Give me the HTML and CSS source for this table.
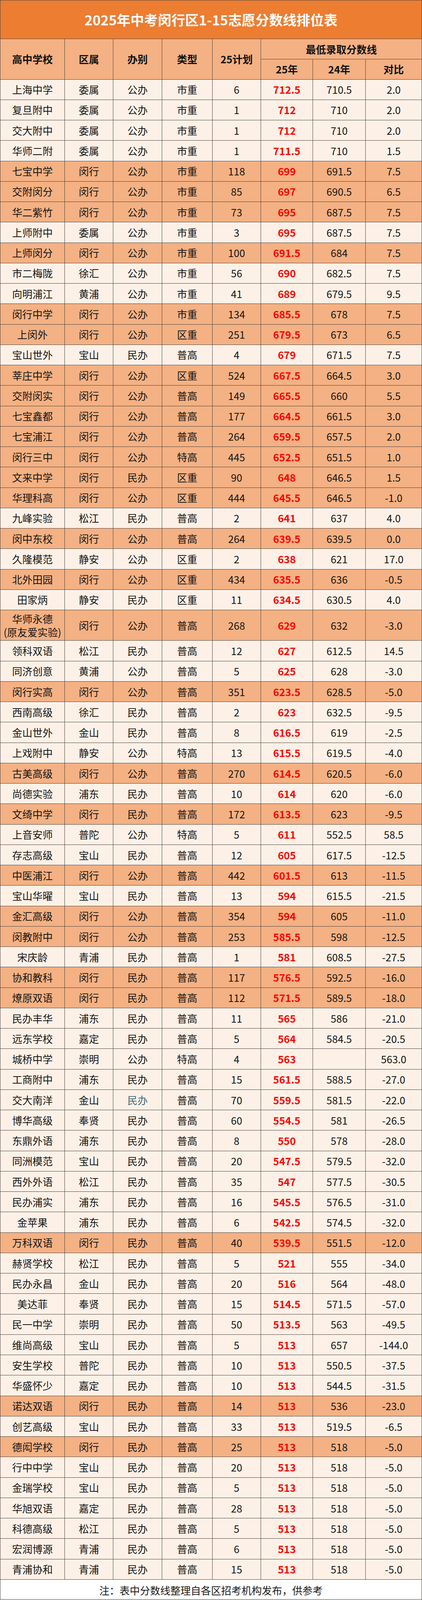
FILE: index.html
```html
<!DOCTYPE html>
<html lang="zh-CN">
<head>
<meta charset="utf-8">
<title>2025年中考闵行区1-15志愿分数线排位表</title>
<link rel="stylesheet" href="styles.css">
</head>
<body>
<div class="sheet" role="table">
<div class="cell title">2025年中考闵行区1-15志愿分数线排位表</div>

<div class="cell hd span-r">高中学校</div>
<div class="cell hd span-r">区属</div>
<div class="cell hd span-r">办别</div>
<div class="cell hd span-r">类型</div>
<div class="cell hd span-r">25计划</div>
<div class="cell hd span-c hd-top">最低录取分数线</div>
<div class="cell hd hd-bot">25年</div>
<div class="cell hd hd-bot">24年</div>
<div class="cell hd hd-bot">对比</div>

<div class="row"><div>上海中学</div><div>委属</div><div>公办</div><div>市重</div><div>6</div><div class="s25">712.5</div><div>710.5</div><div>2.0</div></div>
<div class="row"><div>复旦附中</div><div>委属</div><div>公办</div><div>市重</div><div>1</div><div class="s25">712</div><div>710</div><div>2.0</div></div>
<div class="row"><div>交大附中</div><div>委属</div><div>公办</div><div>市重</div><div>1</div><div class="s25">712</div><div>710</div><div>2.0</div></div>
<div class="row"><div>华师二附</div><div>委属</div><div>公办</div><div>市重</div><div>1</div><div class="s25">711.5</div><div>710</div><div>1.5</div></div>
<div class="row mh"><div>七宝中学</div><div>闵行</div><div>公办</div><div>市重</div><div>118</div><div class="s25">699</div><div>691.5</div><div>7.5</div></div>
<div class="row mh"><div>交附闵分</div><div>闵行</div><div>公办</div><div>市重</div><div>85</div><div class="s25">697</div><div>690.5</div><div>6.5</div></div>
<div class="row mh"><div>华二紫竹</div><div>闵行</div><div>公办</div><div>市重</div><div>73</div><div class="s25">695</div><div>687.5</div><div>7.5</div></div>
<div class="row"><div>上师附中</div><div>委属</div><div>公办</div><div>市重</div><div>3</div><div class="s25">695</div><div>687.5</div><div>7.5</div></div>
<div class="row mh"><div>上师闵分</div><div>闵行</div><div>公办</div><div>市重</div><div>100</div><div class="s25">691.5</div><div>684</div><div>7.5</div></div>
<div class="row"><div>市二梅陇</div><div>徐汇</div><div>公办</div><div>市重</div><div>56</div><div class="s25">690</div><div>682.5</div><div>7.5</div></div>
<div class="row"><div>向明浦江</div><div>黄浦</div><div>公办</div><div>市重</div><div>41</div><div class="s25">689</div><div>679.5</div><div>9.5</div></div>
<div class="row mh"><div>闵行中学</div><div>闵行</div><div>公办</div><div>市重</div><div>134</div><div class="s25">685.5</div><div>678</div><div>7.5</div></div>
<div class="row mh"><div>上闵外</div><div>闵行</div><div>公办</div><div>区重</div><div>251</div><div class="s25">679.5</div><div>673</div><div>6.5</div></div>
<div class="row"><div>宝山世外</div><div>宝山</div><div>民办</div><div>普高</div><div>4</div><div class="s25">679</div><div>671.5</div><div>7.5</div></div>
<div class="row mh"><div>莘庄中学</div><div>闵行</div><div>公办</div><div>区重</div><div>524</div><div class="s25">667.5</div><div>664.5</div><div>3.0</div></div>
<div class="row mh"><div>交附闵实</div><div>闵行</div><div>公办</div><div>普高</div><div>149</div><div class="s25">665.5</div><div>660</div><div>5.5</div></div>
<div class="row mh"><div>七宝鑫都</div><div>闵行</div><div>公办</div><div>普高</div><div>177</div><div class="s25">664.5</div><div>661.5</div><div>3.0</div></div>
<div class="row mh"><div>七宝浦江</div><div>闵行</div><div>公办</div><div>普高</div><div>264</div><div class="s25">659.5</div><div>657.5</div><div>2.0</div></div>
<div class="row mh"><div>闵行三中</div><div>闵行</div><div>公办</div><div>特高</div><div>445</div><div class="s25">652.5</div><div>651.5</div><div>1.0</div></div>
<div class="row mh"><div>文来中学</div><div>闵行</div><div>民办</div><div>区重</div><div>90</div><div class="s25">648</div><div>646.5</div><div>1.5</div></div>
<div class="row mh"><div>华理科高</div><div>闵行</div><div>公办</div><div>区重</div><div>444</div><div class="s25">645.5</div><div>646.5</div><div>-1.0</div></div>
<div class="row"><div>九峰实验</div><div>松江</div><div>民办</div><div>普高</div><div>2</div><div class="s25">641</div><div>637</div><div>4.0</div></div>
<div class="row mh"><div>闵中东校</div><div>闵行</div><div>公办</div><div>普高</div><div>264</div><div class="s25">639.5</div><div>639.5</div><div>0.0</div></div>
<div class="row"><div>久隆模范</div><div>静安</div><div>公办</div><div>区重</div><div>2</div><div class="s25">638</div><div>621</div><div>17.0</div></div>
<div class="row mh"><div>北外田园</div><div>闵行</div><div>公办</div><div>区重</div><div>434</div><div class="s25">635.5</div><div>636</div><div>-0.5</div></div>
<div class="row"><div>田家炳</div><div>静安</div><div>民办</div><div>区重</div><div>11</div><div class="s25">634.5</div><div>630.5</div><div>4.0</div></div>
<div class="row mh tall"><div class="two-line">华师永德<br>(原友爱实验)</div><div>闵行</div><div>公办</div><div>普高</div><div>268</div><div class="s25">629</div><div>632</div><div>-3.0</div></div>
<div class="row"><div>领科双语</div><div>松江</div><div>民办</div><div>普高</div><div>12</div><div class="s25">627</div><div>612.5</div><div>14.5</div></div>
<div class="row"><div>同济创意</div><div>黄浦</div><div>公办</div><div>普高</div><div>5</div><div class="s25">625</div><div>628</div><div>-3.0</div></div>
<div class="row mh"><div>闵行实高</div><div>闵行</div><div>公办</div><div>普高</div><div>351</div><div class="s25">623.5</div><div>628.5</div><div>-5.0</div></div>
<div class="row"><div>西南高级</div><div>徐汇</div><div>民办</div><div>普高</div><div>2</div><div class="s25">623</div><div>632.5</div><div>-9.5</div></div>
<div class="row"><div>金山世外</div><div>金山</div><div>民办</div><div>普高</div><div>8</div><div class="s25">616.5</div><div>619</div><div>-2.5</div></div>
<div class="row"><div>上戏附中</div><div>静安</div><div>公办</div><div>特高</div><div>13</div><div class="s25">615.5</div><div>619.5</div><div>-4.0</div></div>
<div class="row mh"><div>古美高级</div><div>闵行</div><div>公办</div><div>普高</div><div>270</div><div class="s25">614.5</div><div>620.5</div><div>-6.0</div></div>
<div class="row"><div>尚德实验</div><div>浦东</div><div>民办</div><div>普高</div><div>10</div><div class="s25">614</div><div>620</div><div>-6.0</div></div>
<div class="row mh"><div>文绮中学</div><div>闵行</div><div>民办</div><div>普高</div><div>172</div><div class="s25">613.5</div><div>623</div><div>-9.5</div></div>
<div class="row"><div>上音安师</div><div>普陀</div><div>公办</div><div>特高</div><div>5</div><div class="s25">611</div><div>552.5</div><div>58.5</div></div>
<div class="row"><div>存志高级</div><div>宝山</div><div>民办</div><div>普高</div><div>12</div><div class="s25">605</div><div>617.5</div><div>-12.5</div></div>
<div class="row mh"><div>中医浦江</div><div>闵行</div><div>公办</div><div>普高</div><div>442</div><div class="s25">601.5</div><div>613</div><div>-11.5</div></div>
<div class="row"><div>宝山华曜</div><div>宝山</div><div>民办</div><div>普高</div><div>13</div><div class="s25">594</div><div>615.5</div><div>-21.5</div></div>
<div class="row mh"><div>金汇高级</div><div>闵行</div><div>公办</div><div>普高</div><div>354</div><div class="s25">594</div><div>605</div><div>-11.0</div></div>
<div class="row mh"><div>闵教附中</div><div>闵行</div><div>公办</div><div>普高</div><div>253</div><div class="s25">585.5</div><div>598</div><div>-12.5</div></div>
<div class="row"><div>宋庆龄</div><div>青浦</div><div>民办</div><div>普高</div><div>1</div><div class="s25">581</div><div>608.5</div><div>-27.5</div></div>
<div class="row mh"><div>协和教科</div><div>闵行</div><div>民办</div><div>普高</div><div>117</div><div class="s25">576.5</div><div>592.5</div><div>-16.0</div></div>
<div class="row mh"><div>燎原双语</div><div>闵行</div><div>民办</div><div>普高</div><div>112</div><div class="s25">571.5</div><div>589.5</div><div>-18.0</div></div>
<div class="row"><div>民办丰华</div><div>浦东</div><div>民办</div><div>普高</div><div>11</div><div class="s25">565</div><div>586</div><div>-21.0</div></div>
<div class="row"><div>远东学校</div><div>嘉定</div><div>民办</div><div>普高</div><div>5</div><div class="s25">564</div><div>584.5</div><div>-20.5</div></div>
<div class="row"><div>城桥中学</div><div>崇明</div><div>公办</div><div>特高</div><div>4</div><div class="s25">563</div><div></div><div>563.0</div></div>
<div class="row"><div>工商附中</div><div>浦东</div><div>民办</div><div>普高</div><div>15</div><div class="s25">561.5</div><div>588.5</div><div>-27.0</div></div>
<div class="row"><div>交大南洋</div><div>金山</div><div class="alt-ink">民办</div><div>普高</div><div>70</div><div class="s25">559.5</div><div>581.5</div><div>-22.0</div></div>
<div class="row"><div>博华高级</div><div>奉贤</div><div>民办</div><div>普高</div><div>60</div><div class="s25">554.5</div><div>581</div><div>-26.5</div></div>
<div class="row"><div>东鼎外语</div><div>浦东</div><div>民办</div><div>普高</div><div>8</div><div class="s25">550</div><div>578</div><div>-28.0</div></div>
<div class="row"><div>同洲模范</div><div>宝山</div><div>民办</div><div>普高</div><div>20</div><div class="s25">547.5</div><div>579.5</div><div>-32.0</div></div>
<div class="row"><div>西外外语</div><div>松江</div><div>民办</div><div>普高</div><div>35</div><div class="s25">547</div><div>577.5</div><div>-30.5</div></div>
<div class="row"><div>民办浦实</div><div>浦东</div><div>民办</div><div>普高</div><div>16</div><div class="s25">545.5</div><div>576.5</div><div>-31.0</div></div>
<div class="row"><div>金苹果</div><div>浦东</div><div>民办</div><div>普高</div><div>6</div><div class="s25">542.5</div><div>574.5</div><div>-32.0</div></div>
<div class="row mh"><div>万科双语</div><div>闵行</div><div>民办</div><div>普高</div><div>40</div><div class="s25">539.5</div><div>551.5</div><div>-12.0</div></div>
<div class="row"><div>赫贤学校</div><div>松江</div><div>民办</div><div>普高</div><div>5</div><div class="s25">521</div><div>555</div><div>-34.0</div></div>
<div class="row"><div>民办永昌</div><div>金山</div><div>民办</div><div>普高</div><div>20</div><div class="s25">516</div><div>564</div><div>-48.0</div></div>
<div class="row"><div>美达菲</div><div>奉贤</div><div>民办</div><div>普高</div><div>15</div><div class="s25">514.5</div><div>571.5</div><div>-57.0</div></div>
<div class="row"><div>民一中学</div><div>崇明</div><div>民办</div><div>普高</div><div>50</div><div class="s25">513.5</div><div>563</div><div>-49.5</div></div>
<div class="row"><div>维尚高级</div><div>宝山</div><div>民办</div><div>普高</div><div>5</div><div class="s25">513</div><div>657</div><div>-144.0</div></div>
<div class="row"><div>安生学校</div><div>普陀</div><div>民办</div><div>普高</div><div>10</div><div class="s25">513</div><div>550.5</div><div>-37.5</div></div>
<div class="row"><div>华盛怀少</div><div>嘉定</div><div>民办</div><div>普高</div><div>10</div><div class="s25">513</div><div>544.5</div><div>-31.5</div></div>
<div class="row mh"><div>诺达双语</div><div>闵行</div><div>民办</div><div>普高</div><div>14</div><div class="s25">513</div><div>536</div><div>-23.0</div></div>
<div class="row"><div>创艺高级</div><div>宝山</div><div>民办</div><div>普高</div><div>33</div><div class="s25">513</div><div>519.5</div><div>-6.5</div></div>
<div class="row mh"><div>德闳学校</div><div>闵行</div><div>民办</div><div>普高</div><div>25</div><div class="s25">513</div><div>518</div><div>-5.0</div></div>
<div class="row"><div>行中中学</div><div>宝山</div><div>民办</div><div>普高</div><div>20</div><div class="s25">513</div><div>518</div><div>-5.0</div></div>
<div class="row"><div>金瑞学校</div><div>宝山</div><div>民办</div><div>普高</div><div>5</div><div class="s25">513</div><div>518</div><div>-5.0</div></div>
<div class="row"><div>华旭双语</div><div>嘉定</div><div>民办</div><div>普高</div><div>28</div><div class="s25">513</div><div>518</div><div>-5.0</div></div>
<div class="row"><div>科德高级</div><div>松江</div><div>民办</div><div>普高</div><div>5</div><div class="s25">513</div><div>518</div><div>-5.0</div></div>
<div class="row"><div>宏润博源</div><div>青浦</div><div>民办</div><div>普高</div><div>6</div><div class="s25">513</div><div>518</div><div>-5.0</div></div>
<div class="row"><div>青浦协和</div><div>青浦</div><div>民办</div><div>普高</div><div>15</div><div class="s25">513</div><div>518</div><div>-5.0</div></div>

<div class="cell foot">注：表中分数线整理自各区招考机构发布，供参考</div>
</div>
</body>
</html>
```
FILE: styles.css
```css
html, body {
  margin: 0;
  padding: 0;
  background: #ffffff;
}

body {
  font-family: "Noto Sans CJK SC", "Microsoft YaHei", "Noto Sans", sans-serif;
  color: #151515;
}

/* Grid sheet: the dark background shows through 1px gaps as cell borders.
   Row heights are set so the whole sheet fits the 4096px-tall viewport. */
.sheet {
  box-sizing: border-box;
  width: 1080px;
  display: grid;
  grid-template-columns: 164px 123px 124px 128px 123px 132px 134px 143px;
  grid-auto-rows: auto;
  gap: 1px;
  background: #4a4440;
  border: 1px solid #4a4440;
}

.cell,
.row > div {
  display: flex;
  align-items: center;
  justify-content: center;
  text-align: center;
  font-size: 26px;
  line-height: 34px;
  white-space: nowrap;
  overflow: hidden;
}

.sheet > .title {
  grid-column: 1 / -1;
  height: 97.9px;
  background: #ed7d31;
  color: #ffffff;
  font-size: 35px;
  font-weight: 700;
  line-height: 44px;
}

.hd {
  background: #f4b183;
  color: #111111;
  font-weight: 700;
}

.span-r {
  grid-row: span 2;
}

.span-c {
  grid-column: span 3;
}

.hd-top {
  height: 51.3px;
}

.hd-bot {
  height: 50.4px;
}

/* each data row is a transparent wrapper; its cells sit directly in the grid */
.sheet > .row {
  display: contents;
}

.row > div {
  height: 51.26px;
  background: #fdf1e7;
}

.row.mh > div {
  background: #f4b183;
}

.row.tall > div {
  height: 77.4px;
}

.row > .two-line {
  white-space: normal;
  line-height: 34px;
}

.row > .s25 {
  color: #ff0000;
  font-weight: 700;
}

.row > .alt-ink {
  color: #3b6a7c;
}

.sheet > .foot {
  grid-column: 1 / -1;
  height: 50.2px;
  background: #ffffff;
  color: #1a1a1a;
  padding-top: 4px;
  box-sizing: border-box;
}
```
